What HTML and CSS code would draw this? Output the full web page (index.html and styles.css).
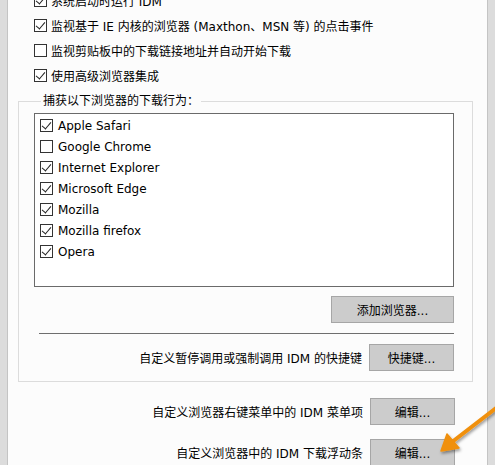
FILE: index.html
```html
<!DOCTYPE html>
<html lang="zh-CN">
<head>
    <meta charset="UTF-8">
    <title>IDM 浏览器集成选项</title>
    <link rel="stylesheet" href="styles.css">
</head>
<body>
    <div class="frame">
        <div class="panel">
            <div class="options">
                <label class="opt"><span class="box on"></span>系统启动时运行 IDM</label>
                <label class="opt"><span class="box on"></span>监视基于 IE 内核的浏览器 (Maxthon、MSN 等) 的点击事件</label>
                <label class="opt"><span class="box"></span>监视剪贴板中的下载链接地址并自动开始下载</label>
                <label class="opt"><span class="box on"></span>使用高级浏览器集成</label>
            </div>

            <fieldset class="group">
                <legend>捕获以下浏览器的下载行为：</legend>
                <div class="listbox">
                    <div class="item"><span class="box on"></span>Apple Safari</div>
                    <div class="item"><span class="box"></span>Google Chrome</div>
                    <div class="item"><span class="box on"></span>Internet Explorer</div>
                    <div class="item"><span class="box on"></span>Microsoft Edge</div>
                    <div class="item"><span class="box on"></span>Mozilla</div>
                    <div class="item"><span class="box on"></span>Mozilla firefox</div>
                    <div class="item"><span class="box on"></span>Opera</div>
                </div>
                <div class="row-end add-row">
                    <button class="btn wide">添加浏览器...</button>
                </div>
                <div class="sep"></div>
                <div class="row-end">
                    <span class="label">自定义暂停调用或强制调用 IDM 的快捷键</span>
                    <button class="btn">快捷键...</button>
                </div>
            </fieldset>

            <div class="bottom">
                <div class="row-end">
                    <span class="label">自定义浏览器右键菜单中的 IDM 菜单项</span>
                    <button class="btn">编辑...</button>
                </div>
                <div class="row-end">
                    <span class="label">自定义浏览器中的 IDM 下载浮动条</span>
                    <button class="btn">编辑...</button>
                </div>
            </div>
        </div>
    </div>

    <!-- 标注箭头 -->
    <svg class="arrow" width="75" height="70" viewBox="0 0 75 70">
        <defs>
            <filter id="shadow" x="-30%" y="-30%" width="160%" height="160%">
                <feDropShadow dx="1" dy="2" stdDeviation="1.5" flood-color="#000" flood-opacity="0.4"/>
            </filter>
        </defs>
        <g filter="url(#shadow)" fill="#f0900c" stroke="#f0900c">
            <line x1="80" y1="10" x2="32" y2="47" stroke-width="4" stroke-linecap="round"/>
            <polygon points="21,56 27,39 39,53" stroke-width="1.5" stroke-linejoin="round"/>
        </g>
    </svg>
</body>
</html>
```

FILE: styles.css
```css
* {
    margin: 0;
    padding: 0;
    box-sizing: border-box;
}

body {
    font-family: 'DejaVu Sans', 'Noto Sans CJK SC', sans-serif;
    font-size: 12px;
    color: #000;
    background: #dcdcdc;
    width: 495px;
    height: 465px;
    overflow: hidden;
    position: relative;
}

.frame {
    height: 465px;
    margin: 0 7px;
    border-left: 1px solid #c4c4c4;
    border-right: 1px solid #c4c4c4;
    background: #fcfcfc;
    overflow: hidden;
}

.panel {
    padding: 0 14px 0 10px;
}

.options {
    margin-top: -12px;
    padding-left: 16px;
}

.opt {
    display: flex;
    align-items: center;
    height: 25px;
    white-space: nowrap;
}

.box {
    display: inline-block;
    width: 13px;
    height: 13px;
    border: 1px solid #333;
    background: #fff;
    margin-right: 4px;
    flex-shrink: 0;
    position: relative;
}

.box.on::after {
    content: '';
    position: absolute;
    left: 3px;
    top: 0px;
    width: 4px;
    height: 8px;
    border-right: 1.5px solid #222;
    border-bottom: 1.5px solid #222;
    transform: rotate(40deg);
}

.group {
    margin-top: 6px;
    border: 1px solid #dcdcdc;
    padding: 0 18px 10px 15px;
}

.group legend {
    margin-left: 7px;
    padding: 0 2px;
    line-height: 14px;
}

.listbox {
    margin-top: 5px;
    height: 174px;
    border: 1px solid #6a6a6a;
    background: #fff;
    padding: 1px 0 0 5px;
}

.item {
    display: flex;
    align-items: center;
    height: 21px;
}

.item .box {
    margin-right: 5px;
}

.row-end {
    display: flex;
    justify-content: flex-end;
    align-items: center;
    gap: 7px;
}

.add-row {
    margin-top: 9px;
}

.btn {
    font-family: inherit;
    font-size: 12px;
    color: #000;
    width: 85px;
    height: 27px;
    background: #cccccc;
    border: 1px solid #a6a6a6;
}

.btn.wide {
    width: 123px;
}

.sep {
    height: 1px;
    background: #6e6e6e;
    margin: 10px 0 10px 5px;
}

.bottom {
    padding-right: 18px;
    margin-top: 16px;
    display: flex;
    flex-direction: column;
    gap: 14px;
}

.arrow {
    position: absolute;
    left: 420px;
    top: 395px;
}
```
